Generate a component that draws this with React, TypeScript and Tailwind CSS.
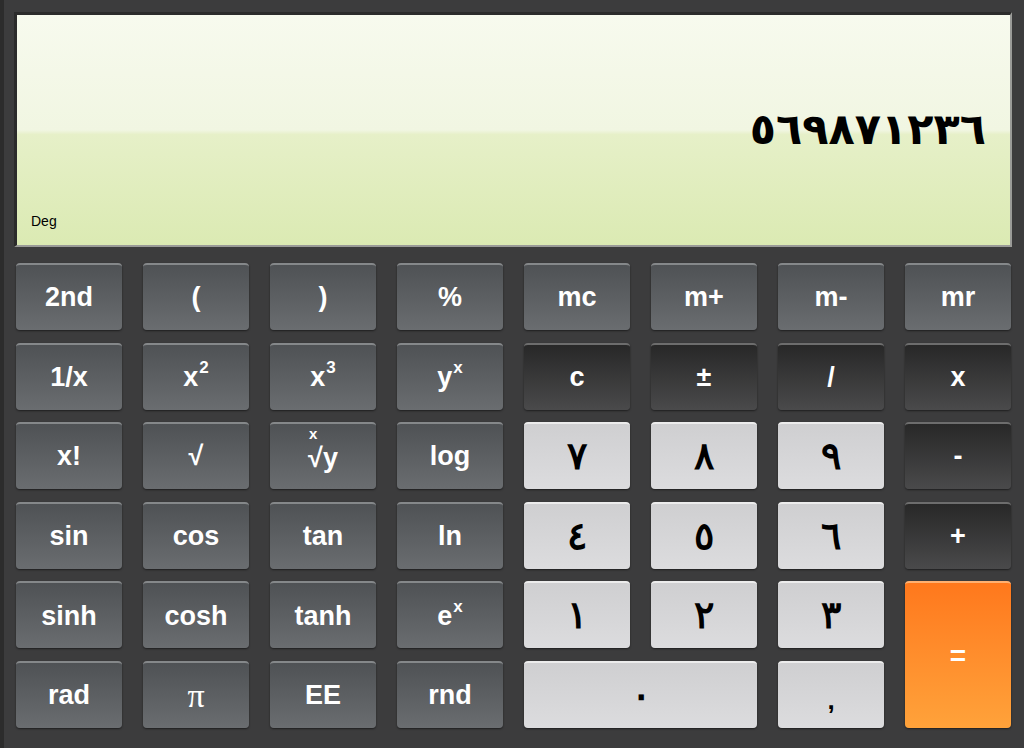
import React from 'react';

type Kind = 'fn' | 'op' | 'num' | 'eq';

type Key = {
  label: React.ReactNode;
  kind: Kind;
  span?: string;
};

const sup = (base: string, exp: string) => (
  <span className="flex items-start">
    {base}
    <span className="text-[17px] leading-none mt-[2px] ml-[1px]">{exp}</span>
  </span>
);

const keys: Key[] = [
  { label: '2nd', kind: 'fn' },
  { label: '(', kind: 'fn' },
  { label: ')', kind: 'fn' },
  { label: '%', kind: 'fn' },
  { label: 'mc', kind: 'fn' },
  { label: 'm+', kind: 'fn' },
  { label: 'm-', kind: 'fn' },
  { label: 'mr', kind: 'fn' },

  { label: '1/x', kind: 'fn' },
  { label: sup('x', '2'), kind: 'fn' },
  { label: sup('x', '3'), kind: 'fn' },
  { label: sup('y', 'x'), kind: 'fn' },
  { label: 'c', kind: 'op' },
  { label: '±', kind: 'op' },
  { label: '/', kind: 'op' },
  { label: 'x', kind: 'op' },

  { label: 'x!', kind: 'fn' },
  { label: '√', kind: 'fn' },
  {
    label: (
      <span className="relative pt-[4px]">
        <span className="absolute left-[1px] -top-[8px] text-[15px] leading-none">x</span>
        √y
      </span>
    ),
    kind: 'fn',
  },
  { label: 'log', kind: 'fn' },
  { label: '٧', kind: 'num' },
  { label: '٨', kind: 'num' },
  { label: '٩', kind: 'num' },
  { label: '-', kind: 'op' },

  { label: 'sin', kind: 'fn' },
  { label: 'cos', kind: 'fn' },
  { label: 'tan', kind: 'fn' },
  { label: 'ln', kind: 'fn' },
  { label: '٤', kind: 'num' },
  { label: '٥', kind: 'num' },
  { label: '٦', kind: 'num' },
  { label: '+', kind: 'op' },

  { label: 'sinh', kind: 'fn' },
  { label: 'cosh', kind: 'fn' },
  { label: 'tanh', kind: 'fn' },
  { label: sup('e', 'x'), kind: 'fn' },
  { label: '١', kind: 'num' },
  { label: '٢', kind: 'num' },
  { label: '٣', kind: 'num' },
  { label: '=', kind: 'eq', span: 'row-span-2' },

  { label: 'rad', kind: 'fn' },
  { label: <span className="font-['Liberation_Serif',serif] font-normal text-[34px]">π</span>, kind: 'fn' },
  { label: 'EE', kind: 'fn' },
  { label: 'rnd', kind: 'fn' },
  { label: '٠', kind: 'num', span: 'col-span-2' },
  { label: <span className="text-[26px] pt-[10px]">,</span>, kind: 'num' },
];

function CalcKey({ k }: { k: Key }) {
  const base =
    'flex items-center justify-center rounded-[4px] font-bold select-none font-["Liberation_Sans",Arial,sans-serif]';
  const styles: Record<Kind, string> = {
    fn: 'bg-gradient-to-b from-[#4f5255] to-[#6a6d70] text-white text-[27px] border-t-2 border-[#85888a] shadow-[0_1px_2px_rgba(0,0,0,0.5)]',
    op: 'bg-gradient-to-b from-[#282828] to-[#4a4a4b] text-white text-[27px] border-t-2 border-[#6d6d6d] shadow-[0_1px_2px_rgba(0,0,0,0.5)]',
    num: 'bg-gradient-to-b from-[#cfcfd1] to-[#dcdcde] text-black text-[38px] border-t-2 border-[#ececec] font-["DejaVu_Sans",sans-serif] shadow-[0_1px_2px_rgba(0,0,0,0.5)]',
    eq: 'bg-gradient-to-b from-[#ff781c] to-[#ffa23a] text-white text-[28px] border-t-2 border-[#ffb070] shadow-[0_1px_2px_rgba(0,0,0,0.5)]',
  };
  return <div className={`${base} ${styles[k.kind]} ${k.span ?? ''}`}>{k.label}</div>;
}

export default function App() {
  return (
    <div className="w-[1024px] h-[748px] bg-[#3c3c3d] border-l-4 border-[#2c2c2c] overflow-hidden">
      <div className="pt-[12px] pl-[10px] pr-[12px]">
        <div className="h-[235px] border-t-[3px] border-l-[3px] border-[#2b2b2b] border-b-[2px] border-r-[2px] border-b-[#9a9b98] border-r-[#9a9b98] bg-[linear-gradient(to_bottom,#f7faee_0%,#f1f6e2_50%,#e6f0c8_52%,#dbeab3_100%)] flex flex-col px-[14px] pb-[17px]">
          <div className="flex-1 flex items-center justify-end pr-[10px] pt-[30px]">
            <span className="font-['DejaVu_Sans',sans-serif] font-bold text-[43px] leading-none text-black tracking-[-2px]">
              ٥٦٩٨٧١٢٣٦
            </span>
          </div>
          <div className="font-['Liberation_Sans',Arial,sans-serif] text-[14px] text-black leading-none">Deg</div>
        </div>
      </div>
      <div className="pt-[16px] pl-[12px] grid grid-cols-[repeat(8,106px)] grid-rows-[repeat(6,67px)] gap-x-[21px] gap-y-[12.6px]">
        {keys.map((k, i) => (
          <CalcKey key={i} k={k} />
        ))}
      </div>
    </div>
  );
}
